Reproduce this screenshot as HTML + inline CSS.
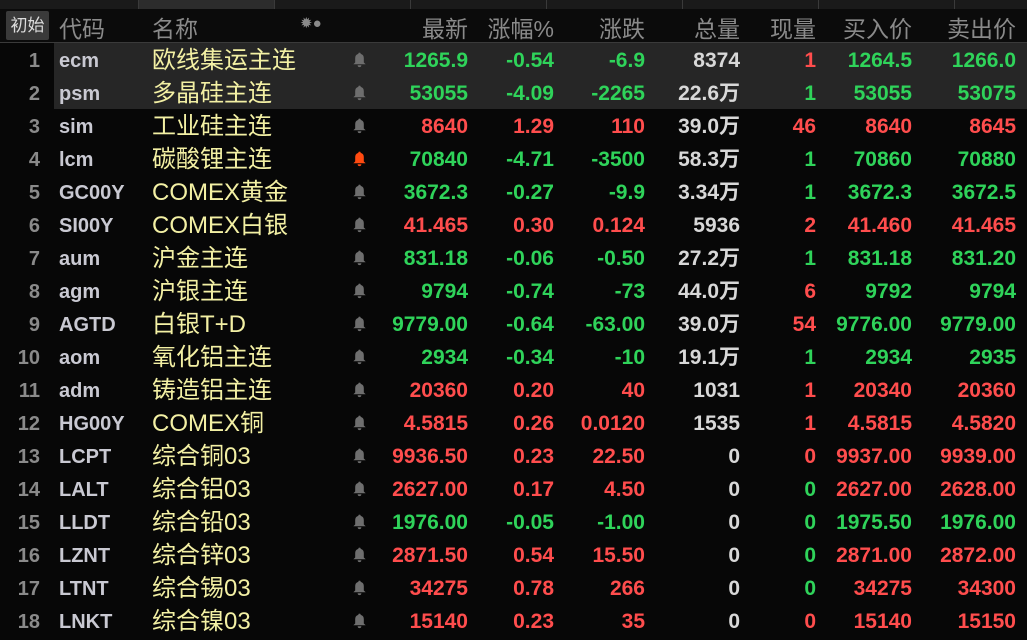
<!DOCTYPE html>
<html><head><meta charset="utf-8"><style>
body{margin:0;width:1027px;height:634px;background:#070707;overflow:hidden;font-family:"Liberation Sans","Noto Sans CJK SC",sans-serif;position:relative}
.tabs{position:absolute;left:0;top:0;width:1027px;height:9px;background:#1a1a1a}
.tab{position:absolute;top:0;height:9px;border-right:1px solid #3a3a3a}
.hdr{position:absolute;left:0;top:9px;width:1027px;height:33px;background:#0b0b0b;border-bottom:1px solid #3a3a3a;color:#8a8a8a;font-size:23px}
.hdr span,.row span{position:absolute;white-space:nowrap}
.init{left:6px;top:2px;width:43px;height:29px;background:#3a3a3a;border-radius:2px;color:#ddd;font-size:17px;text-align:center;line-height:29px}
.row{position:absolute;left:0;width:1027px;height:33px;font-size:21px;line-height:35px}
.sel{position:absolute;left:54px;right:0;top:0;bottom:0;background:#262626}
.n{left:0;width:40px;text-align:right;color:#8a8a8a;font-weight:bold;font-size:20px;top:1px}
.c{left:59px;color:#c9c9d2;font-weight:bold;font-size:20px;top:1px}
.nm{left:152px;color:#f3f0a4;font-size:24px}
.r{text-align:right;font-weight:bold}
.g{color:#2fd35a}.d{color:#ff4d4d}.w{color:#d8d8d8}
.bell{left:352px;top:9px;width:15px;height:16px}
</style></head><body>
<div class="tabs"><div class="tab" style="left:0;width:138px"></div><div class="tab" style="left:139px;width:135px;background:#2c2c2c"></div><div class="tab" style="left:275px;width:135px"></div><div class="tab" style="left:411px;width:135px"></div><div class="tab" style="left:547px;width:135px"></div><div class="tab" style="left:683px;width:135px"></div><div class="tab" style="left:819px;width:135px"></div></div>
<div class="hdr">
<span class="init">初始</span>
<span style="left:59px;top:1px">代码</span><span style="left:152px;top:1px">名称</span>
<span style="left:300px;top:5px;font-size:15px">✹●</span>
<span style="right:559px;top:1px">最新</span><span style="right:473px;top:1px">涨幅%</span><span style="right:382px;top:1px">涨跌</span><span style="right:287px;top:1px">总量</span><span style="right:211px;top:1px">现量</span><span style="right:115px;top:1px">买入价</span><span style="right:11px;top:1px">卖出价</span>
</div>
<div id="rows"></div>
<script>
var D=[
["ecm","欧线集运主连","g","1265.9","-0.54","-6.9","8374","d1","1264.5","1266.0",1],
["psm","多晶硅主连","g","53055","-4.09","-2265","22.6万","g1","53055","53075",1],
["sim","工业硅主连","d","8640","1.29","110","39.0万","d46","8640","8645"],
["lcm","碳酸锂主连","g","70840","-4.71","-3500","58.3万","g1","70860","70880",0,1],
["GC00Y","COMEX黄金","g","3672.3","-0.27","-9.9","3.34万","g1","3672.3","3672.5"],
["SI00Y","COMEX白银","d","41.465","0.30","0.124","5936","d2","41.460","41.465"],
["aum","沪金主连","g","831.18","-0.06","-0.50","27.2万","g1","831.18","831.20"],
["agm","沪银主连","g","9794","-0.74","-73","44.0万","d6","9792","9794"],
["AGTD","白银T+D","g","9779.00","-0.64","-63.00","39.0万","d54","9776.00","9779.00"],
["aom","氧化铝主连","g","2934","-0.34","-10","19.1万","g1","2934","2935"],
["adm","铸造铝主连","d","20360","0.20","40","1031","d1","20340","20360"],
["HG00Y","COMEX铜","d","4.5815","0.26","0.0120","1535","d1","4.5815","4.5820"],
["LCPT","综合铜03","d","9936.50","0.23","22.50","0","d0","9937.00","9939.00"],
["LALT","综合铝03","d","2627.00","0.17","4.50","0","g0","2627.00","2628.00"],
["LLDT","综合铅03","g","1976.00","-0.05","-1.00","0","g0","1975.50","1976.00"],
["LZNT","综合锌03","d","2871.50","0.54","15.50","0","g0","2871.00","2872.00"],
["LTNT","综合锡03","d","34275","0.78","266","0","g0","34275","34300"],
["LNKT","综合镍03","d","15140","0.23","35","0","d0","15140","15150"]];
var h="";
D.forEach(function(r,i){
var c=r[2],bc=r[11]?"#ff4a10":"#6e6e6e";
h+='<div class="row" style="top:'+(43+i*33)+'px">'+(r[10]?'<div class="sel"></div>':'')+
'<span class="n">'+(i+1)+'</span><span class="c">'+r[0]+'</span><span class="nm">'+r[1]+'</span>'+
'<svg class="bell" style="position:absolute" viewBox="0 0 12 13"><path d="M6 0.5a1 1 0 0 1 1 1 3.5 3.5 0 0 1 2.5 3.4V8.5l1.5 1.5H1L2.5 8.5V4.9A3.5 3.5 0 0 1 5 1.5a1 1 0 0 1 1-1zM4.5 10.8h3a1.5 1.5 0 0 1-3 0z" fill="'+bc+'"/></svg>'+
'<span class="r '+c+'" style="right:559px">'+r[3]+'</span>'+
'<span class="r '+c+'" style="right:473px">'+r[4]+'</span>'+
'<span class="r '+c+'" style="right:382px">'+r[5]+'</span>'+
'<span class="r w" style="right:287px">'+r[6]+'</span>'+
'<span class="r '+r[7][0]+'" style="right:211px">'+r[7].slice(1)+'</span>'+
'<span class="r '+c+'" style="right:115px">'+r[8]+'</span>'+
'<span class="r '+c+'" style="right:11px">'+r[9]+'</span></div>';});
document.getElementById("rows").innerHTML=h;
</script>
</body></html>
